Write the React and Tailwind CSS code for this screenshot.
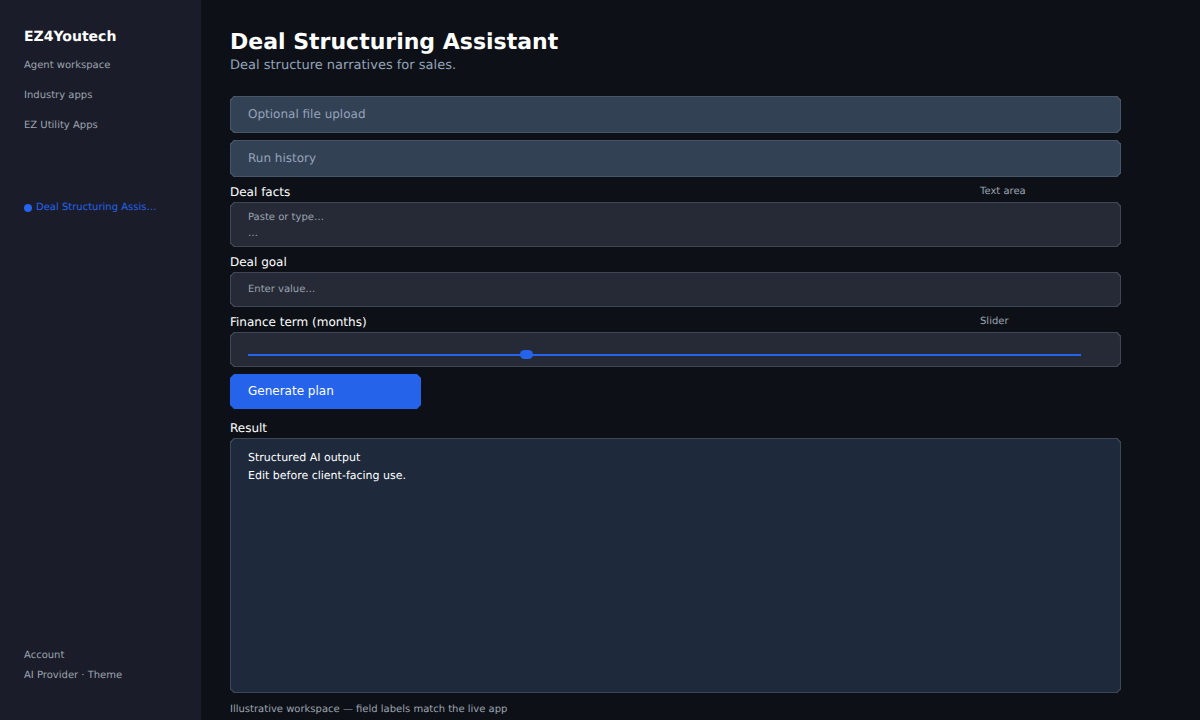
function NavText({ className = "", children }) {
  return <div className={`text-[10px] leading-[12px] text-[#9ca3af] ${className}`}>{children}</div>;
}

function Collapsed({ children }) {
  return (
    <div className="h-[37px] rounded-[4px] [corner-shape:bevel] border border-[#475569] bg-[#334155] pl-[17px] pb-[1px] flex items-center text-[12px] text-[#94a3b8]">
      {children}
    </div>
  );
}

function FieldLabel({ children, kind, className = "" }) {
  return (
    <div className={`flex h-[17px] items-start ${className}`}>
      <div className="w-[750px] text-[12px] leading-[14px] text-white">{children}</div>
      {kind && <div className="pt-[1px] text-[10px] leading-[12px] text-[#9ca3af]">{kind}</div>}
    </div>
  );
}

export default function App() {
  return (
    <div className="flex h-[720px] w-[1200px] overflow-hidden bg-[#0d1117] [font-family:'DejaVu_Sans',sans-serif] [text-rendering:geometricPrecision]">
      <aside className="flex h-full w-[201px] shrink-0 flex-col bg-[#1a1d29] pl-[24px] pt-[29px] pb-[38px]">
        <div className="text-[14px] font-bold leading-[17px] text-white">EZ4Youtech</div>
        <NavText className="mt-[14px]">Agent workspace</NavText>
        <NavText className="mt-[18px]">Industry apps</NavText>
        <NavText className="mt-[18px]">EZ Utility Apps</NavText>
        <div className="mt-[70px] flex items-center gap-[4px] text-[10px] leading-[12px] text-[#2563eb]">
          <span className="h-[8px] w-[8px] rounded-full bg-[#2563eb]" />
          <span>Deal Structuring Assis…</span>
        </div>
        <NavText className="mt-auto">Account</NavText>
        <NavText className="mt-[8px]">AI Provider · Theme</NavText>
      </aside>

      <main className="flex w-[999px] flex-col pl-[29px] pt-[29px]">
        <h1 className="text-[22px] font-bold leading-[27px] text-white">Deal Structuring Assistant</h1>
        <p className="mt-[2px] text-[13px] leading-[16px] text-[#94a3b8]">Deal structure narratives for sales.</p>

        <div className="mt-[22px] flex w-[891px] flex-col">
          <Collapsed>Optional file upload</Collapsed>
          <div className="mt-[7px]"><Collapsed>Run history</Collapsed></div>

          <FieldLabel kind="Text area" className="mt-[8px]">Deal facts</FieldLabel>
          <div className="h-[45px] rounded-[4px] [corner-shape:bevel] border border-[#3f4654] bg-[#252a36] pl-[17px] pt-[7px] text-[10px] leading-[16px] text-[#9ca3af]">
            <div>Paste or type…</div>
            <div>…</div>
          </div>

          <FieldLabel className="mt-[8px]">Deal goal</FieldLabel>
          <div className="flex h-[35px] items-center rounded-[4px] [corner-shape:bevel] border border-[#3f4654] bg-[#252a36] pl-[17px] text-[10px] text-[#9ca3af]">
            Enter value…
          </div>

          <FieldLabel kind="Slider" className="mt-[8px]">Finance term (months)</FieldLabel>
          <div className="h-[35px] rounded-[4px] [corner-shape:bevel] border border-[#3f4654] bg-[#252a36] pl-[17px] pt-[21px]">
            <div className="relative h-[2px] w-[833px] bg-[#2563eb]">
              <span className="absolute left-[272px] top-[-4px] h-[9px] w-[13px] rounded-full bg-[#2563eb]" />
            </div>
          </div>

          <button className="mt-[7px] h-[35px] w-[191px] rounded-[4px] [corner-shape:bevel] bg-[#2563eb] pb-[2px] pl-[18px] text-left text-[12px] text-white">
            Generate plan
          </button>

          <div className="mt-[12px] h-[17px] text-[12px] leading-[14px] text-white">Result</div>
          <div className="h-[255px] rounded-[4px] [corner-shape:bevel] border border-[#3f4654] bg-[#1e293b] pl-[17px] pt-[10px] text-[11px] leading-[18px] text-white">
            <div>Structured AI output</div>
            <div>Edit before client-facing use.</div>
          </div>

          <div className="mt-[11px] text-[10px] leading-[12px] text-[#9ca3af]">Illustrative workspace — field labels match the live app</div>
        </div>
      </main>
    </div>
  );
}
